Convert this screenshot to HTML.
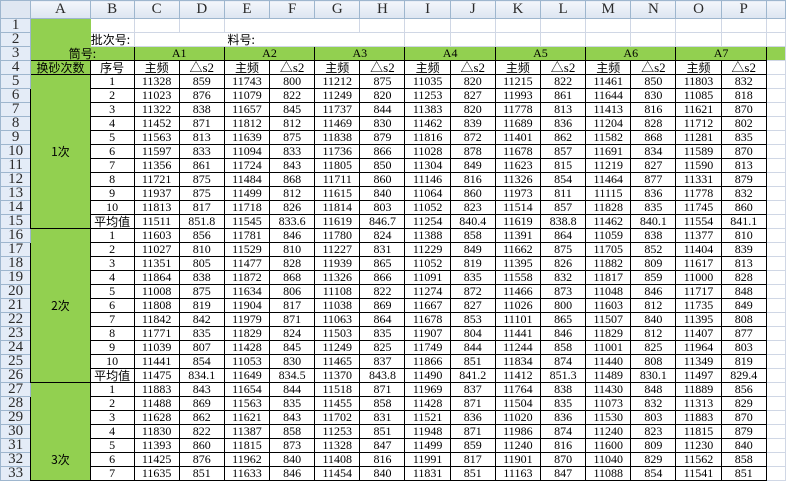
<!DOCTYPE html>
<html><head><meta charset="utf-8"><style>
html,body{margin:0;padding:0;width:786px;height:471px;overflow:hidden;background:#fff}
table{border-collapse:collapse;table-layout:fixed;font-family:"Liberation Serif","Noto Sans CJK SC",serif;font-size:12px;position:absolute;left:0;top:0}
td{padding:0;height:13px;line-height:13px;text-align:center;border:1px solid #D0D7E5;white-space:nowrap;overflow:hidden;color:#000}
tr.h td{height:17px;background:linear-gradient(#F3F6FB,#DCE5F1);border-color:#9EB6CE;font-size:15px;color:#2a2a2a}
td.r{background:#E4ECF7;border-color:#9EB6CE;font-size:15px;color:#2a2a2a;border-right:1px solid #9EB6CE}
.g{background:#92D050}
td.k{border:1px solid #000}
.cj{font-family:"Noto Sans CJK SC",sans-serif;font-size:12px}
.t{font-size:13px}
</style></head><body>
<table>
<colgroup><col style="width:31px"><col style="width:60px"><col style="width:44px">
<col style="width:46px"><col style="width:46px"><col style="width:46px"><col style="width:46px"><col style="width:46px"><col style="width:46px"><col style="width:46px"><col style="width:46px"><col style="width:46px"><col style="width:46px"><col style="width:46px"><col style="width:46px"><col style="width:46px"><col style="width:46px"><col style="width:20px"></colgroup>
<tr class="h"><td style="background:#dfe7f2"></td><td>A</td><td>B</td><td>C</td><td>D</td><td>E</td><td>F</td><td>G</td><td>H</td><td>I</td><td>J</td><td>K</td><td>L</td><td>M</td><td>N</td><td>O</td><td>P</td><td></td></tr>
<tr><td class="r">1</td><td class="g" style="border-color:#92D050"></td><td></td><td></td><td></td><td style="border-right-color:#fff"></td><td style="border-left-color:#fff;border-right-color:#fff"></td><td style="border-left-color:#fff"></td><td></td><td></td><td></td><td></td><td></td><td></td><td></td><td></td><td></td><td></td></tr>
<tr><td class="r">2</td><td class="g" style="border-color:#92D050"></td><td class="cj" style="text-align:left">批次号:</td><td style="border-right-color:#fff"></td><td style="border-left-color:#fff;border-right-color:#fff"></td><td class="cj" style="text-align:left;border-left-color:#fff;border-right-color:#fff">&nbsp;料号:</td><td style="border-left-color:#fff;border-right-color:#fff"></td><td style="border-left-color:#fff;border-right-color:#fff"></td><td style="border-left-color:#fff"></td><td></td><td></td><td></td><td></td><td></td><td></td><td></td><td></td><td></td></tr>
<tr><td class="r">3</td><td class="g k cj" colspan="2">筒号:</td><td class="g k" colspan="2">A1</td><td class="g k" colspan="2">A2</td><td class="g k" colspan="2">A3</td><td class="g k" colspan="2">A4</td><td class="g k" colspan="2">A5</td><td class="g k" colspan="2">A6</td><td class="g k" colspan="2">A7</td><td class="g"></td></tr>
<tr><td class="r">4</td><td class="g k cj">换砂次数</td><td class="k cj">序号</td><td class="k cj">主频</td><td class="k t">△s2</td><td class="k cj">主频</td><td class="k t">△s2</td><td class="k cj">主频</td><td class="k t">△s2</td><td class="k cj">主频</td><td class="k t">△s2</td><td class="k cj">主频</td><td class="k t">△s2</td><td class="k cj">主频</td><td class="k t">△s2</td><td class="k cj">主频</td><td class="k t">△s2</td><td></td></tr>
<tr><td class="r">5</td><td class="g k cj" rowspan="11">1次</td><td class="k">1</td><td class="k">11328</td><td class="k">859</td><td class="k">11743</td><td class="k">800</td><td class="k">11212</td><td class="k">875</td><td class="k">11035</td><td class="k">820</td><td class="k">11215</td><td class="k">822</td><td class="k">11461</td><td class="k">850</td><td class="k">11803</td><td class="k">832</td><td></td></tr>
<tr><td class="r">6</td><td class="k">2</td><td class="k">11023</td><td class="k">876</td><td class="k">11079</td><td class="k">822</td><td class="k">11249</td><td class="k">820</td><td class="k">11253</td><td class="k">827</td><td class="k">11993</td><td class="k">861</td><td class="k">11644</td><td class="k">830</td><td class="k">11085</td><td class="k">818</td><td></td></tr>
<tr><td class="r">7</td><td class="k">3</td><td class="k">11322</td><td class="k">838</td><td class="k">11657</td><td class="k">845</td><td class="k">11737</td><td class="k">844</td><td class="k">11383</td><td class="k">820</td><td class="k">11778</td><td class="k">813</td><td class="k">11413</td><td class="k">816</td><td class="k">11621</td><td class="k">870</td><td></td></tr>
<tr><td class="r">8</td><td class="k">4</td><td class="k">11452</td><td class="k">871</td><td class="k">11812</td><td class="k">812</td><td class="k">11469</td><td class="k">830</td><td class="k">11462</td><td class="k">839</td><td class="k">11689</td><td class="k">836</td><td class="k">11204</td><td class="k">828</td><td class="k">11712</td><td class="k">802</td><td></td></tr>
<tr><td class="r">9</td><td class="k">5</td><td class="k">11563</td><td class="k">813</td><td class="k">11639</td><td class="k">875</td><td class="k">11838</td><td class="k">879</td><td class="k">11816</td><td class="k">872</td><td class="k">11401</td><td class="k">862</td><td class="k">11582</td><td class="k">868</td><td class="k">11281</td><td class="k">835</td><td></td></tr>
<tr><td class="r">10</td><td class="k">6</td><td class="k">11597</td><td class="k">833</td><td class="k">11094</td><td class="k">833</td><td class="k">11736</td><td class="k">866</td><td class="k">11028</td><td class="k">878</td><td class="k">11678</td><td class="k">857</td><td class="k">11691</td><td class="k">834</td><td class="k">11589</td><td class="k">870</td><td></td></tr>
<tr><td class="r">11</td><td class="k">7</td><td class="k">11356</td><td class="k">861</td><td class="k">11724</td><td class="k">843</td><td class="k">11805</td><td class="k">850</td><td class="k">11304</td><td class="k">849</td><td class="k">11623</td><td class="k">815</td><td class="k">11219</td><td class="k">827</td><td class="k">11590</td><td class="k">813</td><td></td></tr>
<tr><td class="r">12</td><td class="k">8</td><td class="k">11721</td><td class="k">875</td><td class="k">11484</td><td class="k">868</td><td class="k">11711</td><td class="k">860</td><td class="k">11146</td><td class="k">816</td><td class="k">11326</td><td class="k">854</td><td class="k">11464</td><td class="k">877</td><td class="k">11331</td><td class="k">879</td><td></td></tr>
<tr><td class="r">13</td><td class="k">9</td><td class="k">11937</td><td class="k">875</td><td class="k">11499</td><td class="k">812</td><td class="k">11615</td><td class="k">840</td><td class="k">11064</td><td class="k">860</td><td class="k">11973</td><td class="k">811</td><td class="k">11115</td><td class="k">836</td><td class="k">11778</td><td class="k">832</td><td></td></tr>
<tr><td class="r">14</td><td class="k">10</td><td class="k">11813</td><td class="k">817</td><td class="k">11718</td><td class="k">826</td><td class="k">11814</td><td class="k">803</td><td class="k">11052</td><td class="k">823</td><td class="k">11514</td><td class="k">857</td><td class="k">11828</td><td class="k">835</td><td class="k">11745</td><td class="k">860</td><td></td></tr>
<tr><td class="r">15</td><td class="k cj">平均值</td><td class="k">11511</td><td class="k">851.8</td><td class="k">11545</td><td class="k">833.6</td><td class="k">11619</td><td class="k">846.7</td><td class="k">11254</td><td class="k">840.4</td><td class="k">11619</td><td class="k">838.8</td><td class="k">11462</td><td class="k">840.1</td><td class="k">11554</td><td class="k">841.1</td><td></td></tr>
<tr><td class="r">16</td><td class="g k cj" rowspan="11">2次</td><td class="k">1</td><td class="k">11603</td><td class="k">856</td><td class="k">11781</td><td class="k">846</td><td class="k">11780</td><td class="k">824</td><td class="k">11388</td><td class="k">858</td><td class="k">11391</td><td class="k">864</td><td class="k">11059</td><td class="k">838</td><td class="k">11377</td><td class="k">810</td><td></td></tr>
<tr><td class="r">17</td><td class="k">2</td><td class="k">11027</td><td class="k">810</td><td class="k">11529</td><td class="k">810</td><td class="k">11227</td><td class="k">831</td><td class="k">11229</td><td class="k">849</td><td class="k">11662</td><td class="k">875</td><td class="k">11705</td><td class="k">852</td><td class="k">11404</td><td class="k">839</td><td></td></tr>
<tr><td class="r">18</td><td class="k">3</td><td class="k">11351</td><td class="k">805</td><td class="k">11477</td><td class="k">828</td><td class="k">11939</td><td class="k">865</td><td class="k">11052</td><td class="k">819</td><td class="k">11395</td><td class="k">826</td><td class="k">11882</td><td class="k">809</td><td class="k">11617</td><td class="k">813</td><td></td></tr>
<tr><td class="r">19</td><td class="k">4</td><td class="k">11864</td><td class="k">838</td><td class="k">11872</td><td class="k">868</td><td class="k">11326</td><td class="k">866</td><td class="k">11091</td><td class="k">835</td><td class="k">11558</td><td class="k">832</td><td class="k">11817</td><td class="k">859</td><td class="k">11000</td><td class="k">828</td><td></td></tr>
<tr><td class="r">20</td><td class="k">5</td><td class="k">11008</td><td class="k">875</td><td class="k">11634</td><td class="k">806</td><td class="k">11108</td><td class="k">822</td><td class="k">11274</td><td class="k">872</td><td class="k">11466</td><td class="k">873</td><td class="k">11048</td><td class="k">846</td><td class="k">11717</td><td class="k">848</td><td></td></tr>
<tr><td class="r">21</td><td class="k">6</td><td class="k">11808</td><td class="k">819</td><td class="k">11904</td><td class="k">817</td><td class="k">11038</td><td class="k">869</td><td class="k">11667</td><td class="k">827</td><td class="k">11026</td><td class="k">800</td><td class="k">11603</td><td class="k">812</td><td class="k">11735</td><td class="k">849</td><td></td></tr>
<tr><td class="r">22</td><td class="k">7</td><td class="k">11842</td><td class="k">842</td><td class="k">11979</td><td class="k">871</td><td class="k">11063</td><td class="k">864</td><td class="k">11678</td><td class="k">853</td><td class="k">11101</td><td class="k">865</td><td class="k">11507</td><td class="k">840</td><td class="k">11395</td><td class="k">808</td><td></td></tr>
<tr><td class="r">23</td><td class="k">8</td><td class="k">11771</td><td class="k">835</td><td class="k">11829</td><td class="k">824</td><td class="k">11503</td><td class="k">835</td><td class="k">11907</td><td class="k">804</td><td class="k">11441</td><td class="k">846</td><td class="k">11829</td><td class="k">812</td><td class="k">11407</td><td class="k">877</td><td></td></tr>
<tr><td class="r">24</td><td class="k">9</td><td class="k">11039</td><td class="k">807</td><td class="k">11428</td><td class="k">845</td><td class="k">11249</td><td class="k">825</td><td class="k">11749</td><td class="k">844</td><td class="k">11244</td><td class="k">858</td><td class="k">11001</td><td class="k">825</td><td class="k">11964</td><td class="k">803</td><td></td></tr>
<tr><td class="r">25</td><td class="k">10</td><td class="k">11441</td><td class="k">854</td><td class="k">11053</td><td class="k">830</td><td class="k">11465</td><td class="k">837</td><td class="k">11866</td><td class="k">851</td><td class="k">11834</td><td class="k">874</td><td class="k">11440</td><td class="k">808</td><td class="k">11349</td><td class="k">819</td><td></td></tr>
<tr><td class="r">26</td><td class="k cj">平均值</td><td class="k">11475</td><td class="k">834.1</td><td class="k">11649</td><td class="k">834.5</td><td class="k">11370</td><td class="k">843.8</td><td class="k">11490</td><td class="k">841.2</td><td class="k">11412</td><td class="k">851.3</td><td class="k">11489</td><td class="k">830.1</td><td class="k">11497</td><td class="k">829.4</td><td></td></tr>
<tr><td class="r">27</td><td class="g k cj" rowspan="7" style="vertical-align:bottom;padding-bottom:14px">3次</td><td class="k">1</td><td class="k">11883</td><td class="k">843</td><td class="k">11654</td><td class="k">844</td><td class="k">11518</td><td class="k">871</td><td class="k">11969</td><td class="k">837</td><td class="k">11764</td><td class="k">838</td><td class="k">11430</td><td class="k">848</td><td class="k">11889</td><td class="k">856</td><td></td></tr>
<tr><td class="r">28</td><td class="k">2</td><td class="k">11488</td><td class="k">869</td><td class="k">11563</td><td class="k">835</td><td class="k">11455</td><td class="k">858</td><td class="k">11428</td><td class="k">871</td><td class="k">11504</td><td class="k">835</td><td class="k">11073</td><td class="k">832</td><td class="k">11313</td><td class="k">829</td><td></td></tr>
<tr><td class="r">29</td><td class="k">3</td><td class="k">11628</td><td class="k">862</td><td class="k">11621</td><td class="k">843</td><td class="k">11702</td><td class="k">831</td><td class="k">11521</td><td class="k">836</td><td class="k">11020</td><td class="k">836</td><td class="k">11530</td><td class="k">803</td><td class="k">11883</td><td class="k">870</td><td></td></tr>
<tr><td class="r">30</td><td class="k">4</td><td class="k">11830</td><td class="k">822</td><td class="k">11387</td><td class="k">858</td><td class="k">11253</td><td class="k">851</td><td class="k">11948</td><td class="k">871</td><td class="k">11986</td><td class="k">874</td><td class="k">11240</td><td class="k">823</td><td class="k">11815</td><td class="k">879</td><td></td></tr>
<tr><td class="r">31</td><td class="k">5</td><td class="k">11393</td><td class="k">860</td><td class="k">11815</td><td class="k">873</td><td class="k">11328</td><td class="k">847</td><td class="k">11499</td><td class="k">859</td><td class="k">11240</td><td class="k">816</td><td class="k">11600</td><td class="k">809</td><td class="k">11230</td><td class="k">840</td><td></td></tr>
<tr><td class="r">32</td><td class="k">6</td><td class="k">11425</td><td class="k">876</td><td class="k">11962</td><td class="k">840</td><td class="k">11408</td><td class="k">816</td><td class="k">11991</td><td class="k">817</td><td class="k">11901</td><td class="k">870</td><td class="k">11040</td><td class="k">829</td><td class="k">11562</td><td class="k">858</td><td></td></tr>
<tr><td class="r">33</td><td class="k">7</td><td class="k">11635</td><td class="k">851</td><td class="k">11633</td><td class="k">846</td><td class="k">11454</td><td class="k">840</td><td class="k">11831</td><td class="k">851</td><td class="k">11163</td><td class="k">847</td><td class="k">11088</td><td class="k">854</td><td class="k">11541</td><td class="k">851</td><td></td></tr>
</table>
</body></html>
